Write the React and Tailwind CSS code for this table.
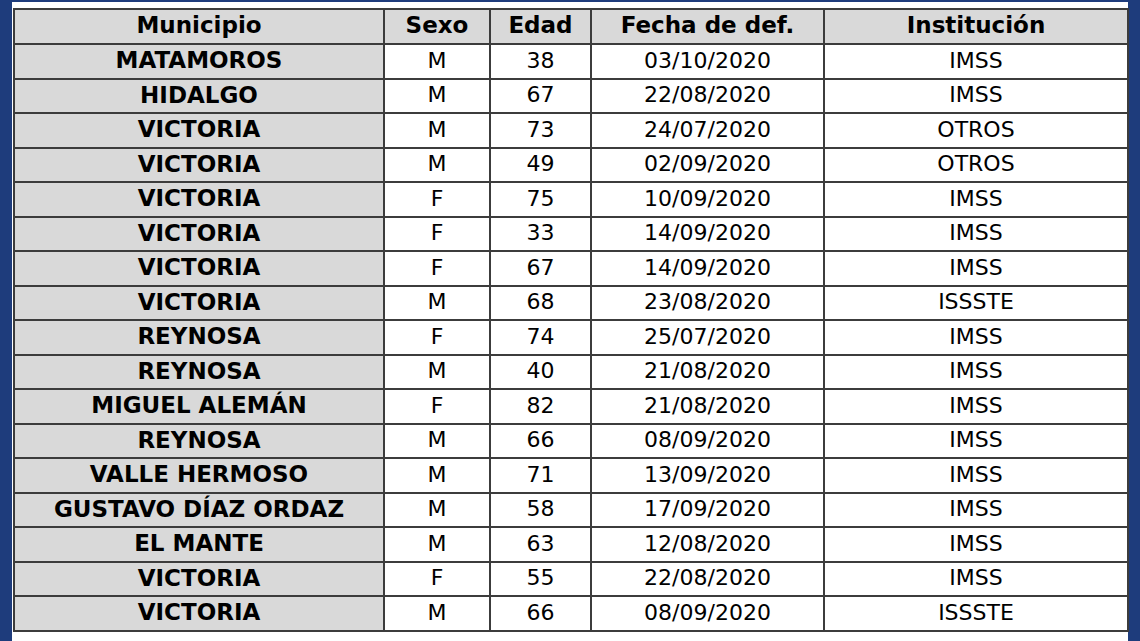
const rows = [
  ['MATAMOROS', 'M', '38', '03/10/2020', 'IMSS'],
  ['HIDALGO', 'M', '67', '22/08/2020', 'IMSS'],
  ['VICTORIA', 'M', '73', '24/07/2020', 'OTROS'],
  ['VICTORIA', 'M', '49', '02/09/2020', 'OTROS'],
  ['VICTORIA', 'F', '75', '10/09/2020', 'IMSS'],
  ['VICTORIA', 'F', '33', '14/09/2020', 'IMSS'],
  ['VICTORIA', 'F', '67', '14/09/2020', 'IMSS'],
  ['VICTORIA', 'M', '68', '23/08/2020', 'ISSSTE'],
  ['REYNOSA', 'F', '74', '25/07/2020', 'IMSS'],
  ['REYNOSA', 'M', '40', '21/08/2020', 'IMSS'],
  ['MIGUEL ALEMÁN', 'F', '82', '21/08/2020', 'IMSS'],
  ['REYNOSA', 'M', '66', '08/09/2020', 'IMSS'],
  ['VALLE HERMOSO', 'M', '71', '13/09/2020', 'IMSS'],
  ['GUSTAVO DÍAZ ORDAZ', 'M', '58', '17/09/2020', 'IMSS'],
  ['EL MANTE', 'M', '63', '12/08/2020', 'IMSS'],
  ['VICTORIA', 'F', '55', '22/08/2020', 'IMSS'],
  ['VICTORIA', 'M', '66', '08/09/2020', 'ISSSTE'],
];

const headers = ['Municipio', 'Sexo', 'Edad', 'Fecha de def.', 'Institución'];

export default function App() {
  return (
    <div className="w-[1140px] h-[641px] bg-[#1e3c7c] pt-[2px] px-[12px] overflow-hidden">
      <div className="bg-white h-full pt-[6px] px-px font-['DejaVu_Sans',sans-serif] text-[22px] text-black">
        <table className="table-fixed border-collapse w-[1115px]">
          <colgroup>
            <col className="w-[370px]" />
            <col className="w-[106px]" />
            <col className="w-[101px]" />
            <col className="w-[233px]" />
            <col className="w-[304px]" />
          </colgroup>
          <thead>
            <tr className="h-[35px] bg-[#d9d9d9]">
              {headers.map((h) => (
                <th key={h} className="border-2 border-[#3c3c3c] font-bold text-[23px] text-center leading-none pb-[2px]">
                  {h}
                </th>
              ))}
            </tr>
          </thead>
          <tbody>
            {rows.map((r, i) => (
              <tr key={i} className="h-[34.5px]">
                {r.map((c, j) => (
                  <td
                    key={j}
                    className={
                      j === 0
                        ? 'border-2 border-[#3c3c3c] bg-[#d9d9d9] font-bold text-[23px] text-center leading-none pb-px'
                        : 'border-2 border-[#3c3c3c] bg-white text-center leading-none pb-px'
                    }
                  >
                    {c}
                  </td>
                ))}
              </tr>
            ))}
          </tbody>
        </table>
      </div>
    </div>
  );
}
